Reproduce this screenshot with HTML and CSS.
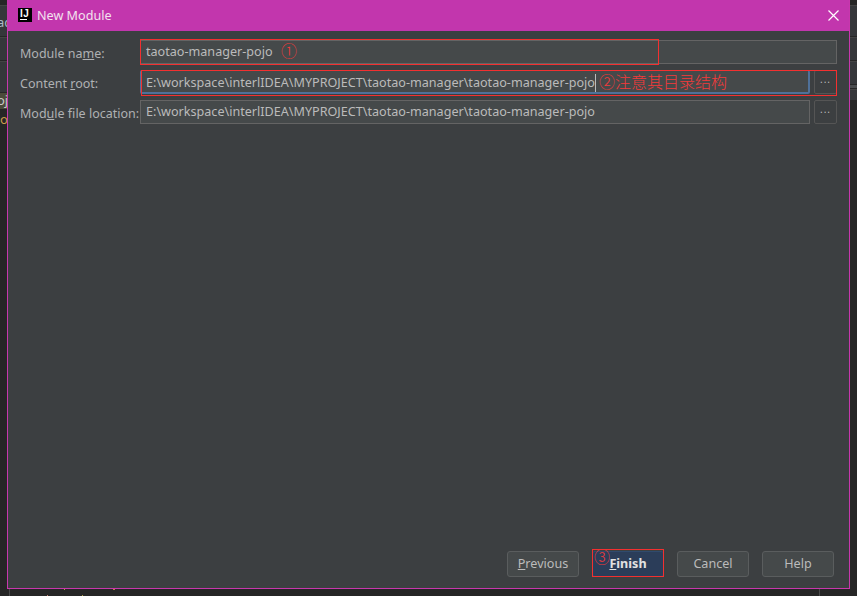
FILE: index.html
```html
<!DOCTYPE html>
<html lang="en">
<head>
<meta charset="utf-8">
<title>New Module</title>
<link rel="stylesheet" href="styles.css">
</head>
<body>
<div class="backdrop">
  <div class="side side-left">
    <span class="panel panel-a"></span>
    <span class="panel panel-b"></span>
    <span class="panel panel-c"></span>
    <span class="panel panel-olive"></span>
  </div>
  <div class="side side-right">
    <span class="panel panel-a"></span>
    <span class="panel panel-b"></span>
    <span class="panel panel-d"></span>
    <span class="panel panel-band"></span>
    <span class="panel panel-e"></span>
  </div>
  <span class="bg-frag bg-frag-top">ac</span>
  <span class="bg-frag bg-frag-mid">oj</span>
  <span class="bg-frag bg-frag-low">o</span>
  <span class="bg-vline bg-vline-left"></span>
  <span class="bg-vline bg-vline-right"></span>
  <span class="bg-dots"></span>
  <div class="dialog">
    <header class="titlebar">
      <span class="logo"><span class="logo-text">IJ</span><span class="logo-bar"></span></span>
      <span class="title">New Module</span>
      <svg class="close" width="11" height="11" viewBox="0 0 11 11"><path d="M.5.5l10 10M10.5.5l-10 10" stroke="#fff" stroke-width="1.2" fill="none"/></svg>
    </header>
    <main class="form">
      <div class="row">
        <label class="label">Module na<u>m</u>e:</label>
        <div class="field">taotao-manager-pojo<span class="mark mark-1">①</span></div>
      </div>
      <div class="row">
        <label class="label">Content <u>r</u>oot:</label>
        <div class="field field-focus">E:\workspace\interlIDEA\MYPROJECT\taotao-manager\taotao-manager-pojo<span class="caret"></span><span class="note">②注意其目录结构</span></div>
        <button class="browse">...</button>
      </div>
      <div class="row">
        <label class="label">Mod<u>u</u>le file location:</label>
        <div class="field">E:\workspace\interlIDEA\MYPROJECT\taotao-manager\taotao-manager-pojo</div>
        <button class="browse">...</button>
      </div>
      <span class="redbox box-name"></span>
      <span class="redbox box-root"></span>
    </main>
    <footer class="actions">
      <button class="btn"><u>P</u>revious</button>
      <button class="btn btn-primary"><u>F</u>inish<span class="mark mark-3">③</span><span class="redbox box-finish"></span></button>
      <button class="btn">Cancel</button>
      <button class="btn">Help</button>
    </footer>
  </div>
</div>
</body>
</html>
```
FILE: styles.css
```css
* { box-sizing: border-box; }
html, body { margin: 0; padding: 0; }
body { width: 857px; height: 596px; overflow: hidden; background: #262626; font-family: "Liberation Sans", "Noto Sans", sans-serif; }
.backdrop { position: relative; width: 857px; height: 596px; background: #262626; padding: 0 7px 7px 7px; }
.side { position: absolute; top: 0; width: 8px; display: flex; flex-direction: column; padding-top: 5px; gap: 1px; }
.side-left { left: 0; }
.side-right { left: 849px; }
.panel { display: block; background: #35373a; border-top: 1px solid #444; }
.panel-a { height: 31px; }
.panel-b { height: 23px; }
.panel-c { height: 31px; }
.panel-d { height: 23px; }
.panel-band { height: 3px; background: #4a4c4e; border: 0; }
.panel-e { height: 11px; }
.panel-olive { height: 16px; background: #4b4a39; border: 0; }
.bg-frag { position: absolute; left: -3px; font-size: 13px; color: #a9b7c6; font-family: "Noto Sans", sans-serif; }
.bg-frag-top { top: 13px; }
.bg-frag-mid { top: 91px; color: #c8c8c8; }
.bg-frag-low { top: 110px; left: 0; color: #cc9a4a; }
.bg-vline { position: absolute; top: 589px; width: 1px; height: 7px; background: #4a4a4a; }
.bg-vline-left { left: 9px; }
.bg-vline-right { left: 819px; }
.bg-dots { position: absolute; left: 64px; top: 589px; width: 1px; height: 1px; background: #b09a40; box-shadow: 49px 0 #c87050, 50px 0 #c87050, -17px 6px #c88070, 18px 6px #b0a040; }
.dialog { position: relative; width: 843px; height: 589px; display: flex; flex-direction: column; background: #3c3f41; border: 1px solid #c837ad; border-top: 0; }
.titlebar { height: 31px; flex: none; display: flex; align-items: center; background: #c236ad; padding: 0 10px 0 10px; color: #fff; }
.logo { position: relative; width: 14px; height: 14px; background: #000; display: block; margin-right: 5px; margin-top: -1px; }
.logo-text { position: absolute; left: 2px; top: 1px; font: bold 10px/9px "Liberation Sans", sans-serif; color: #fff; letter-spacing: 0.5px; }
.logo-bar { position: absolute; left: 2px; bottom: 2px; width: 7px; height: 1px; background: #fff; }
.title { font-family: "Noto Sans", sans-serif; font-size: 12.6px; line-height: 16px; flex: 1; color: #f3e2ef; }
.close { display: block; margin-top: -1px; }
.form { position: relative; flex: 1; padding: 9px 12px 0 12px; display: flex; flex-direction: column; gap: 6px; font-family: "Noto Sans", sans-serif; font-size: 12.6px; color: #bbbbbb; }
.row { display: flex; height: 24px; align-items: center; gap: 4px; }
.label { width: 120px; margin-right: -4px; padding-top: 2px; flex: none; white-space: nowrap; color: #afb1b3; font-size: 12.5px; }
.field { flex: 1; height: 24px; padding: 0 5px; line-height: 22px; background: #45494a; border: 1px solid #646464; white-space: nowrap; position: relative; }
.field-focus { border: 1px solid #4f719a; border-width: 1px 2px 2px 1px; border-radius: 2px; line-height: 23px; }
.browse { width: 23px; height: 24px; padding: 0 0 7px; flex: none; background: #3c3f41; border: 1px solid #555; border-radius: 2px; color: #bbb; font-size: 10px; letter-spacing: 1px; font-family: "Noto Sans", sans-serif; }
.caret { display: inline-block; width: 1px; height: 18px; background: #bbb; vertical-align: -5px; margin-left: 0; }
.note { position: absolute; left: 458px; top: 0; color: #f53a3a; font-family: "Noto Sans CJK SC", sans-serif; font-weight: 300; font-size: 16px; line-height: 20px; }
.mark { color: #f53a3a; font-family: "Noto Sans CJK SC", sans-serif; font-weight: 300; font-size: 16px; position: absolute; line-height: 20px; }
.mark-1 { left: 140px; top: -1px; }
.mark-3 { left: 1px; top: -6px; }
.redbox { position: absolute; border: 1px solid #f33030; pointer-events: none; }
.box-name { left: 132px; top: 8px; width: 519px; height: 26px; }
.box-root { left: 133px; top: 39px; width: 696px; height: 26px; }
.box-finish { left: -1px; top: -3px; width: 72px; height: 28px; }
.actions { flex: none; display: flex; justify-content: flex-end; gap: 13px; padding: 0 15px 11px 0; }
.btn { position: relative; width: 72px; height: 26px; padding: 0 0 2px; font-family: "Noto Sans", sans-serif; font-size: 12.6px; color: #bbbbbb; background: #45494a; border: 1px solid #5a5d5e; border-radius: 3px; }
.btn-primary { background: #2b3d59; border-color: #2f4a6d; color: #e2e2e2; font-weight: bold; }
```
